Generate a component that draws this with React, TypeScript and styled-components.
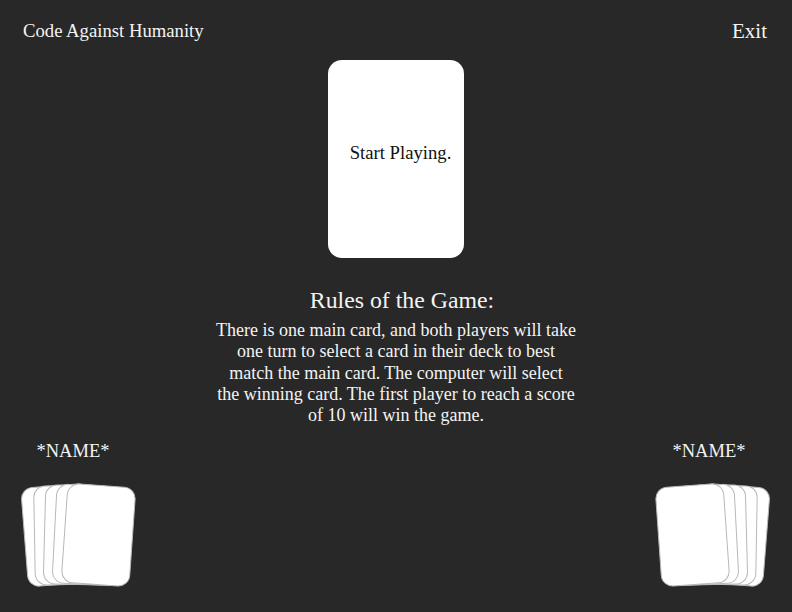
import React from "react";
import styled, { createGlobalStyle } from "styled-components";

const Global = createGlobalStyle`
  html, body { margin: 0; padding: 0; background: #282828; }
  body { font-family: "Liberation Serif", "Times New Roman", serif; color: #f4f4f4; }
  * { box-sizing: border-box; }
`;

const Page = styled.div`
  width: 792px;
  min-height: 612px;
  display: flex;
  flex-direction: column;
`;

const Header = styled.header`
  display: flex;
  justify-content: space-between;
  align-items: center;
  padding: 20px 25px 0 23px;
  height: 42px;
`;

const Brand = styled.div`
  font-size: 18.7px;
  line-height: 22px;
`;

const ExitLink = styled.a`
  font-size: 21px;
  line-height: 22px;
  color: inherit;
  text-decoration: none;
  cursor: pointer;
`;

const Main = styled.main`
  display: flex;
  flex-direction: column;
  align-items: center;
`;

const MainCard = styled.div`
  margin-top: 18px;
  width: 136px;
  height: 198px;
  background: #ffffff;
  border-radius: 14px;
  display: flex;
  align-items: center;
  justify-content: center;
  padding: 0 0 12px 9px;
  color: #111;
  font-size: 18.7px;
`;

const Title = styled.h2`
  margin: 28px 0 0;
  padding-left: 12px;
  font-weight: normal;
  font-size: 23.8px;
  line-height: 28px;
`;

const Rules = styled.p`
  margin: 6px 0 0;
  width: 390px;
  text-align: center;
  font-size: 18px;
  line-height: 21.25px;
`;

const Players = styled.section`
  display: flex;
  justify-content: space-between;
  padding: 14px 23px 0 21px;
`;

const Player = styled.div`
  width: 114px;
  display: flex;
  flex-direction: column;
  align-items: center;
`;

const Name = styled.div<{ $shift: number }>`
  font-size: 18.5px;
  line-height: 22px;
  margin-left: ${(p) => p.$shift}px;
`;

const Hand = styled.div`
  margin-top: 23px;
  display: flex;
`;

const HandCard = styled.div<{ $rot: number; $z: number }>`
  position: relative;
  flex: none;
  width: 69px;
  height: 100px;
  background: #ffffff;
  border: 1px solid #b8b8b8;
  border-radius: 12px;
  transform: rotate(${(p) => p.$rot}deg);
  z-index: ${(p) => p.$z};
  & + & {
    margin-left: -59px;
  }
`;

function PlayerHand({ front, rotations }: { front: "left" | "right"; rotations: number[] }) {
  return (
    <Hand>
      {rotations.map((r, i) => (
        <HandCard key={i} $rot={r} $z={front === "right" ? i + 1 : rotations.length - i} />
      ))}
    </Hand>
  );
}

export default function App() {
  return (
    <>
      <Global />
      <Page>
        <Header>
          <Brand>Code Against Humanity</Brand>
          <ExitLink>Exit</ExitLink>
        </Header>
        <Main>
          <MainCard>Start Playing.</MainCard>
          <Title>Rules of the Game:</Title>
          <Rules>
            There is one main card, and both players will take
            <br />
            one turn to select a card in their deck to best
            <br />
            match the main card. The computer will select
            <br />
            the winning card. The first player to reach a score
            <br />
            of 10 will win the game.
          </Rules>
        </Main>
        <Players>
          <Player>
            <Name $shift={-10}>*NAME*</Name>
            <PlayerHand front="right" rotations={[-4.5, -1, 1.5, 3, 4]} />
          </Player>
          <Player>
            <Name $shift={-6}>*NAME*</Name>
            <PlayerHand front="left" rotations={[-4, -3, -1.5, 1, 4.5]} />
          </Player>
        </Players>
      </Page>
    </>
  );
}
